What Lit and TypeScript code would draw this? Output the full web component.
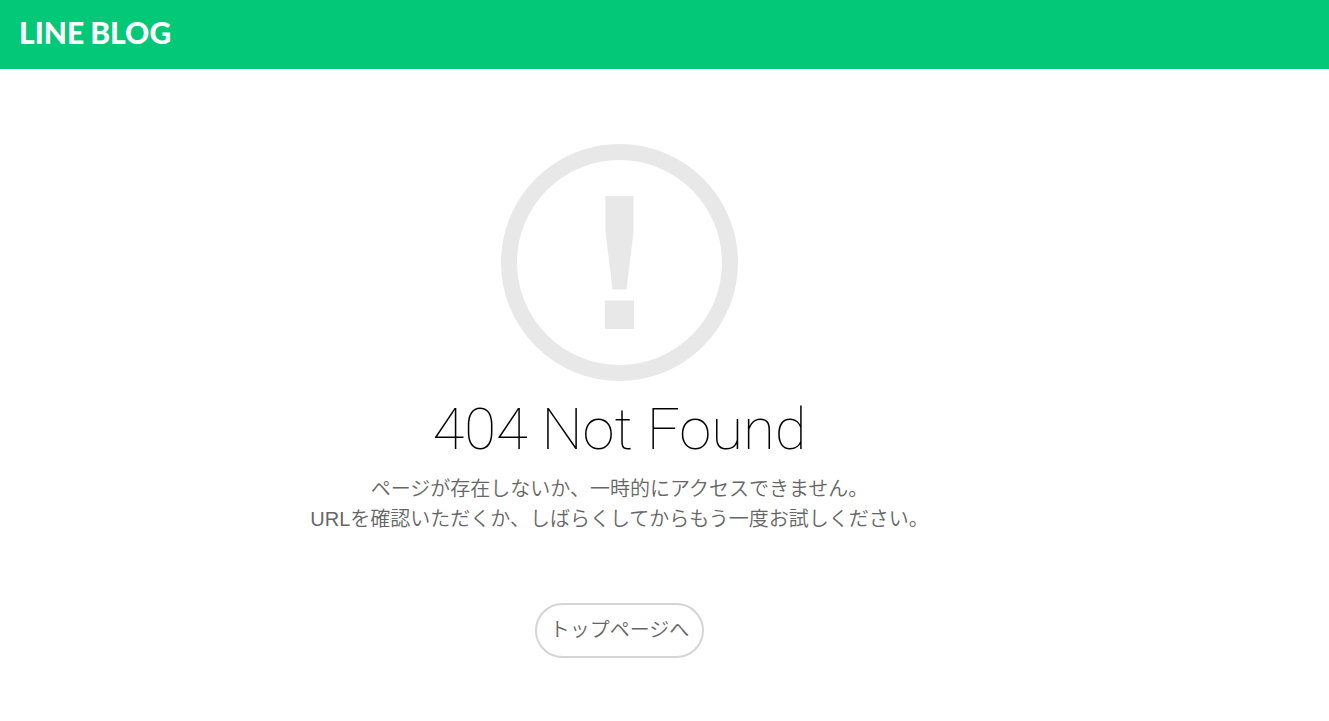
import { LitElement, html, css } from "lit";
import { customElement } from "lit/decorators.js";

@customElement("app-root")
export class AppRoot extends LitElement {
  static styles = css`
    :host {
      display: block;
      min-height: 100vh;
      background: #fff;
      color: #666;
      font-family: "Liberation Sans", "Noto Sans CJK JP", sans-serif;
    }
    .header {
      display: flex;
      box-sizing: border-box;
      height: 69px;
      padding: 14px 19px;
      background: #02c878;
    }
    .logo {
      display: flex;
      gap: 6px;
      height: 36px;
      color: #fff;
      font: 900 30px/36px Lato, sans-serif;
      text-decoration: none;
    }
    .content {
      display: flex;
      flex-direction: column;
      align-items: center;
      padding: 75px 90px 63px 0;
      text-align: center;
    }
    .mark {
      display: block;
      width: 237px;
      height: 237px;
      fill: #e8e8e8;
    }
    .title {
      margin: 14px 0 11px;
      color: #000;
      font: 100 58px/68px Roboto, sans-serif;
    }
    .message {
      margin: 0 0 69px;
      font-size: 20px;
      line-height: 30px;
      font-weight: 350;
    }
    .top-link {
      box-sizing: border-box;
      padding: 10px 13px;
      border: 2px solid #d5d5d5;
      border-radius: 28px;
      color: #666;
      font-size: 20px;
      line-height: 31px;
      font-weight: 350;
      text-decoration: none;
    }
  `;

  render() {
    return html`
      <header class="header">
        <a class="logo" href="/" aria-label="LINE BLOG"><span>LINE</span><span>BLOG</span></a>
      </header>
      <main class="content">
        <svg class="mark" viewBox="0 0 237 237" aria-hidden="true">
          <circle cx="118.5" cy="118.5" r="110.5" fill="none" stroke="#e8e8e8" stroke-width="16" />
          <path d="M104.500 52h28v36l-7 57.500h-14l-7-57.500z" />
          <path d="M104 156.500h29v28.500h-29z" />
        </svg>
        <h1 class="title">404 Not Found</h1>
        <p class="message">
          ページが存在しないか、一時的にアクセスできません。<br />URLを確認いただくか、しばらくしてからもう一度お試しください。
        </p>
        <a class="top-link" href="/">トップページへ</a>
      </main>
    `;
  }
}
